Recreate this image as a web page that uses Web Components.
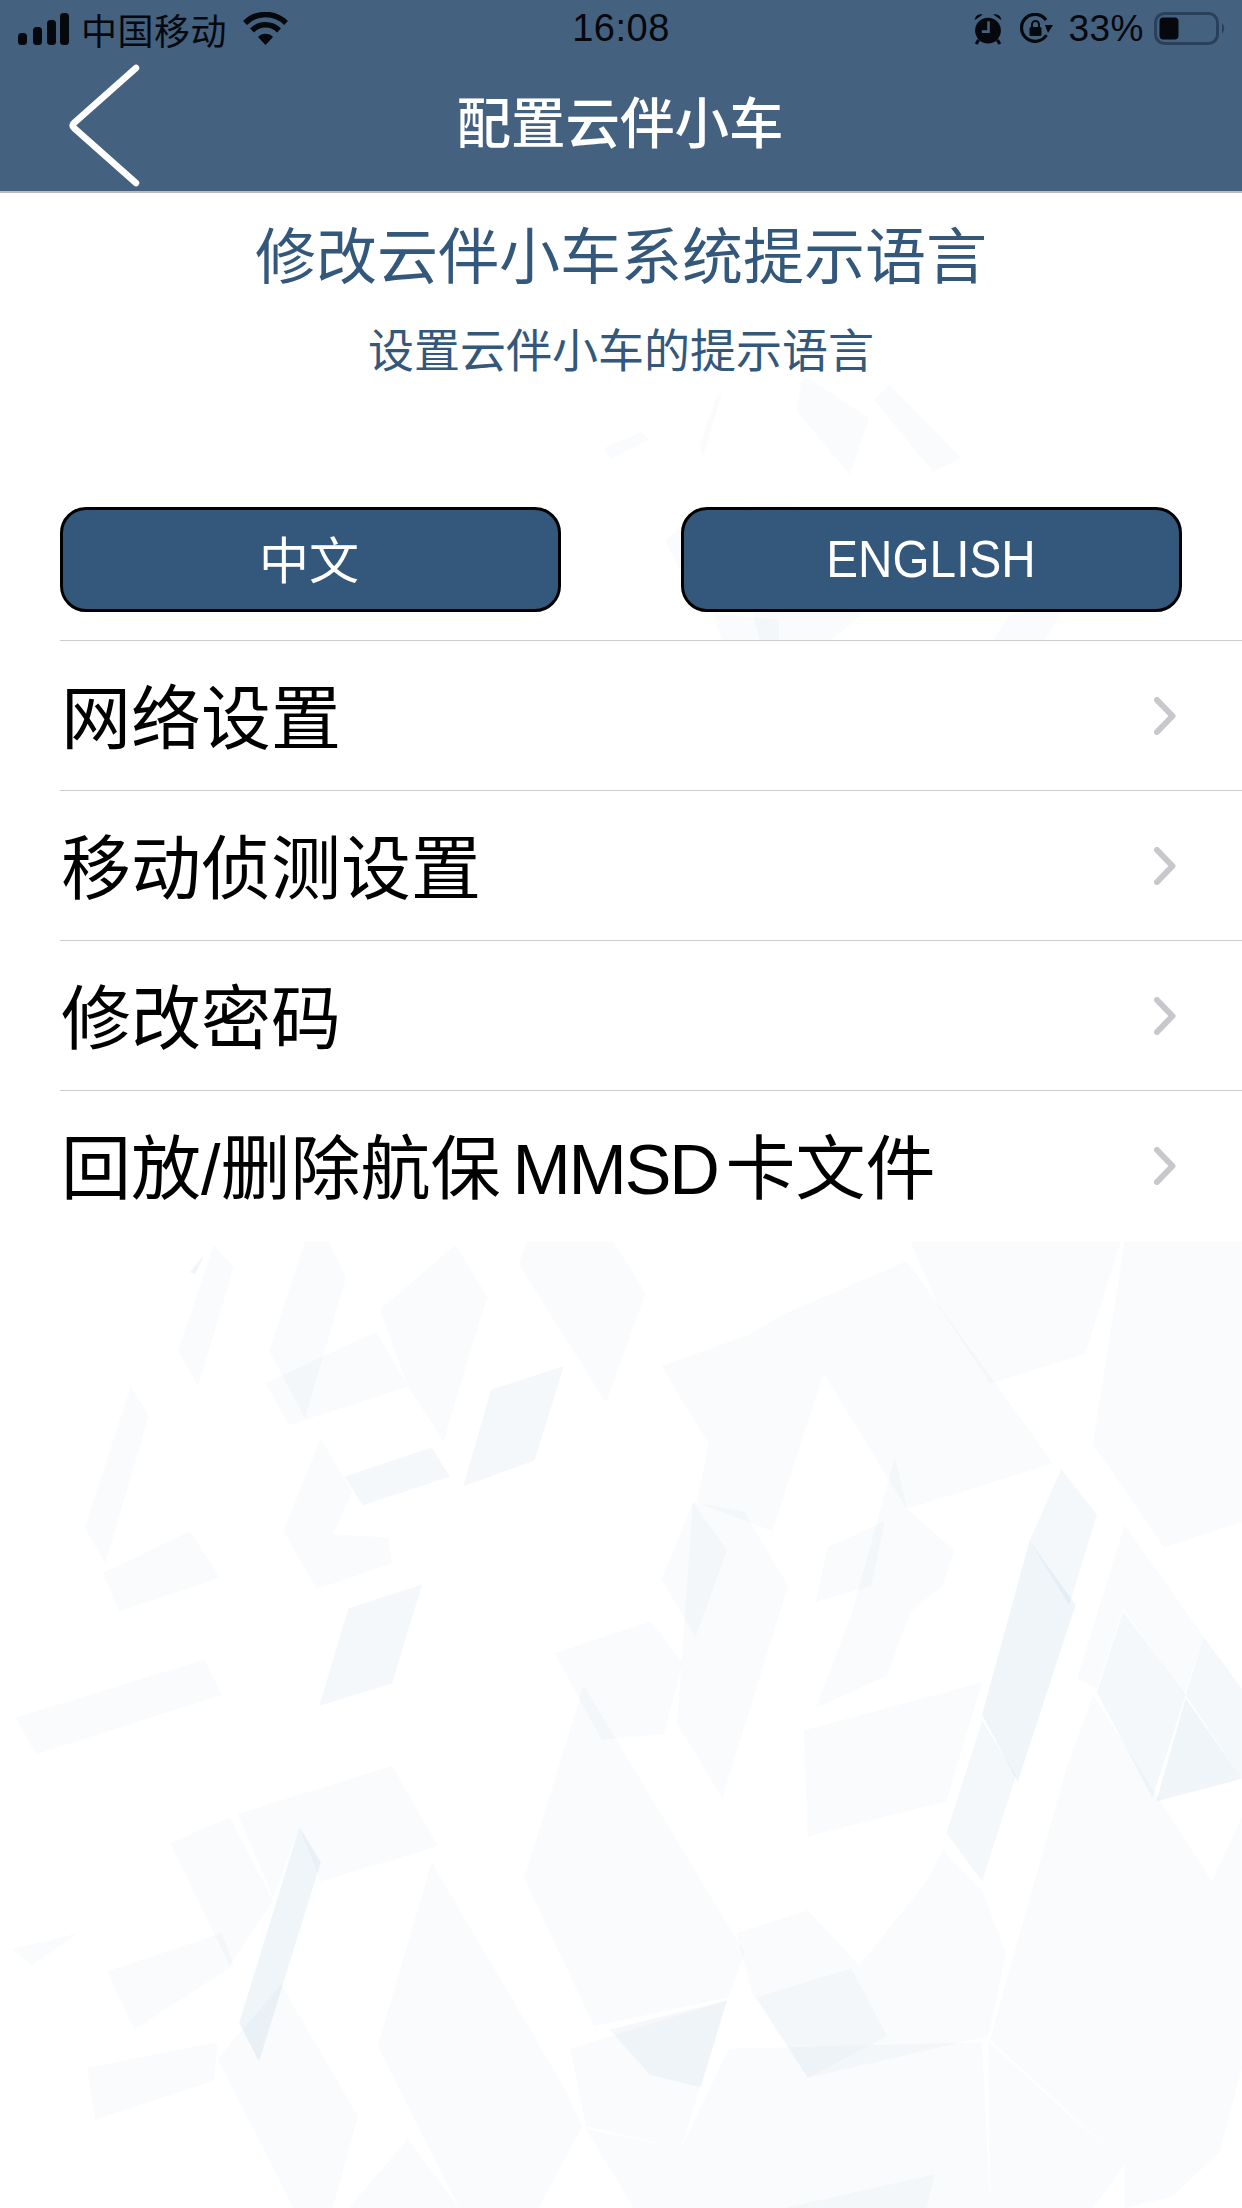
<!DOCTYPE html>
<html lang="zh">
<head>
<meta charset="utf-8">
<title>配置云伴小车</title>
<style>
    html, body { margin: 0; padding: 0; background: #fff; }
    body { font-family: "Liberation Sans", "Noto Sans CJK SC", sans-serif; }
</style>
</head>
<body>
<config-page>
    <lang-button slot="lang">中文</lang-button>
    <lang-button slot="lang" narrow>ENGLISH</lang-button>
    <menu-row>网络设置</menu-row>
    <menu-row>移动侦测设置</menu-row>
    <menu-row>修改密码</menu-row>
    <menu-row>回放/删除航保<span style="margin:0 8px 0 12px;letter-spacing:-2.2px">MMSD</span>卡文件</menu-row>
</config-page>

<script>
// faint background shapes, numbers measured off a 1568x1568 crop of the lower page
const LOWER_SHAPES = [
    [1, '270,70 295,105 250,290 225,235'],
    [1, '385,65 415,65 437,120 385,340 340,235'],
    [1, '475,205 515,290 365,350 335,285'],
    [1, '575,70 615,150 560,375 515,290 480,170'],
    [1, '655,100 665,65 775,65 815,145 765,315'],
    [2, '620,295 712,258 675,405 585,445'],
    [2, '435,430 545,385 568,430 458,475'],
    [1, '165,290 188,335 133,565 107,510'],
    [1, '130,580 240,515 278,588 150,640'],
    [1, '405,370 445,455 420,520 490,525 495,565 400,605 358,515'],
    [2, '440,635 533,598 495,752 403,787'],
    [1, '20,805 258,715 280,770 45,862'],
    [1, '835,258 945,210 985,180 1040,270 975,515 880,470 895,380'],
    [1, '985,180 1145,95 1330,410 1145,480 1040,270'],
    [1, '1150,65 1415,65 1370,240 1250,285 1185,165'],
    [1, '1420,65 1568,65 1568,310 1380,380'],
    [1, '1380,380 1568,310 1568,500 1470,540'],
    [1, '875,470 940,485 995,600 912,930 855,815'],
    [1, '835,590 875,470 918,545 878,680'],
    [1, '1045,540 1117,500 1100,600 1030,625'],
    [1, '1130,400 1145,480 1205,545 1190,600 1150,640 1120,740 1030,790 1075,645'],
    [1, '1015,825 1240,750 1195,935 1020,990'],
    [1, '700,705 822,655 862,720 838,830 760,840'],
    [1, '737,755 940,1170 920,1240 750,1285 662,1055'],
    [2, '1340,418 1385,490 1350,630 1300,530'],
    [3, '1300,530 1358,630 1285,905 1240,800'],
    [2, '1240,810 1283,895 1240,1060 1195,985'],
    [1, '1420,505 1520,680 1495,770 1418,635 1385,760 1360,745'],
    [2, '1418,640 1497,770 1455,930 1385,765'],
    [2, '1520,680 1568,760 1568,900 1497,770'],
    [3, '1497,775 1568,900 1460,935'],
    [1, '1380,770 1530,1060 1420,1500 1250,1305 1345,890'],
    [1, '1190,1010 1240,1075 1270,1170 1248,1300 1020,1365 950,1235 930,1140 1020,1105 1085,1190 1170,1060'],
    [1, '215,1000 290,960 345,1090 290,1190'],
    [1, '300,955 495,880 553,1005 405,1060 378,975 345,1085'],
    [3, '378,975 405,1030 327,1340 302,1280'],
    [1, '545,1030 710,1375 735,1440 680,1568 580,1568 477,1315'],
    [1, '720,1320 918,1245 860,1475 740,1440'],
    [2, '770,1290 918,1245 885,1380 820,1360'],
    [1, '275,1335 355,1220 452,1425 420,1568 370,1568'],
    [1, '1248,1310 1420,1500 1380,1568 1250,1568'],
    [1, '1530,1060 1568,960 1568,1350 1540,1480 1480,1550 1420,1568 1420,1500'],
    [1, '955,1240 1075,1195 1120,1300 1020,1365'],
    [1, '740,1445 860,1475 920,1320 1240,1310 1250,1568 800,1568'],
    [1, '135,1200 280,1140 295,1190 170,1290'],
    [1, '120,1430 270,1370 275,1310 110,1350'],
    [1, '440,1568 515,1460 580,1568'],
    [1, '1180,1515 1170,1568 990,1568'],
    [1, '15,1165 100,1140 40,1190'],
    [3, '240,112 258,85 246,116']
];
// same thing for the strip above the list, in page pixels
const UPPER_SHAPES = [
    [1, '803,375 869,418 850,475 796,410'],
    [1, '890,385 961,458 933,472 874,400'],
    [1, '604,448 642,432 649,440 611,459'],
    [1, '722,393 703,457 700,445 715,400'],
    [1, '713,613 779,620 779,641 722,641'],
    [1, '727,508 789,503 880,600 830,641 760,641'],
    [1, '665,540 690,520 690,590'],
    [1, '992,641 1010,615 1065,605 1045,641']
];
const OPACITY = { 1: 0.035, 2: 0.06, 3: 0.09 };

class BackdropArt extends HTMLElement {
    constructor() {
        super();
        const poly = ([level, points]) => `<polygon points="${points}" fill-opacity="${OPACITY[level]}"/>`;
        this.attachShadow({ mode: 'open' }).innerHTML = `
            <style>
                :host { position: absolute; inset: 0; display: block; }
                svg { display: block; width: 100%; height: 100%; }
            </style>
            <svg viewBox="0 0 1242 2208" fill="#4a90b8">
                ${UPPER_SHAPES.map(poly).join('')}
                <g transform="translate(0 1200) scale(.792 .643)">${LOWER_SHAPES.map(poly).join('')}</g>
            </svg>
        `;
    }
}

class StatusBar extends HTMLElement {
    constructor() {
        super();
        this.attachShadow({ mode: 'open' }).innerHTML = `
            <style>
                :host { display: grid; grid-template-columns: 1fr auto 1fr; align-items: center; height: 57px; padding: 0 15px 7px 18px; color: #05080d; font-size: 37px; }
                .left, .right { display: flex; align-items: center; }
                .right { justify-content: flex-end; }
                svg { display: block; flex: none; }
                .carrier { margin: 0 16px 0 11px; font-size: 36px; letter-spacing: .5px; }
                .time { font-size: 38px; letter-spacing: .5px; margin-right: 3px; }
                .pct { margin: 0 10px 0 15px; letter-spacing: .5px; }
            </style>
            <div class="left">
                <svg width="52" height="32" viewBox="0 0 52 32" fill="#05080d">
                    <rect x="0" y="20" width="9" height="12" rx="3.5"/>
                    <rect x="15" y="14" width="9" height="18" rx="3.5"/>
                    <rect x="29" y="7" width="9" height="25" rx="3.5"/>
                    <rect x="42" y="0" width="9" height="32" rx="3.5"/>
                </svg>
                <span class="carrier">中国移动</span>
                <svg width="45" height="33" viewBox="0 0 45 33" fill="none" stroke="#05080d" stroke-width="5.5">
                    <path d="M2 11 A29 29 0 0 1 43 11"/>
                    <path d="M9 18.5 A19 19 0 0 1 36 18.5"/>
                    <path d="M15 25 A10.5 10.5 0 0 1 30 25 L22.5 33 Z" fill="#05080d" stroke="none"/>
                </svg>
            </div>
            <div class="time">16:08</div>
            <div class="right">
                <svg width="30" height="33" viewBox="0 0 28 32" style="margin-right:17px">
                    <circle cx="14" cy="18" r="12.5" fill="#05080d"/>
                    <path d="M1 8 A6 6 0 0 1 9 2.5 Z M27 8 A6 6 0 0 0 19 2.5 Z" fill="#05080d"/>
                    <path d="M5 27 L2.5 31 M23 27 L25.5 31" stroke="#05080d" stroke-width="3"/>
                    <path d="M14.5 9 V19 H8" fill="none" stroke="#44617f" stroke-width="2.5"/>
                </svg>
                <svg width="33" height="32" viewBox="0 0 33 32">
                    <path d="M26.5 22 A13.5 13.5 0 1 1 26 7" fill="none" stroke="#05080d" stroke-width="3.2"/>
                    <path d="M25 12 L33 12 L28 20 Z" fill="#05080d"/>
                    <rect x="9.5" y="14" width="12" height="9" rx="1.5" fill="#05080d"/>
                    <path d="M12 14 V11.5 A3.5 3.5 0 0 1 19 11.5 V14" fill="none" stroke="#05080d" stroke-width="2"/>
                </svg>
                <span class="pct">33%</span>
                <svg width="73" height="33" viewBox="0 0 73 33">
                    <rect x="1.5" y="1.5" width="62" height="30" rx="9" fill="none" stroke="#29405a" stroke-width="3"/>
                    <rect x="5.5" y="5.5" width="19" height="22" rx="4" fill="#05080d"/>
                    <path d="M68 11 A8 8 0 0 1 68 22 Z" fill="#29405a"/>
                </svg>
            </div>
        `;
    }
}

class NavBar extends HTMLElement {
    constructor() {
        super();
        this.attachShadow({ mode: 'open' }).innerHTML = `
            <style>
                :host { display: flex; position: relative; align-items: center; justify-content: center; height: 127px; padding: 0 2px 5px 0; box-sizing: border-box; }
                .back { position: absolute; left: 68px; top: 0; display: block; }
                h1 { margin: 0; font-size: 54.5px; font-weight: 500; line-height: 64px; color: #fff; }
            </style>
            <svg class="back" width="74" height="124" viewBox="0 0 74 124" fill="none">
                <path d="M68 4 L6 59 Q3 61 6 64 L68 119" stroke="#fff" stroke-width="6.5" stroke-linecap="round" stroke-linejoin="round"/>
            </svg>
            <h1><slot></slot></h1>
        `;
    }
}

class LangButton extends HTMLElement {
    constructor() {
        super();
        this.attachShadow({ mode: 'open' }).innerHTML = `
            <style>
                :host { display: flex; align-items: center; justify-content: center; box-sizing: border-box; width: 501px; height: 105px; padding: 0 3px 5px 0; background: #34587b; border: 3px solid #000; border-radius: 26px; color: #fff; font-size: 50px; }
                :host([narrow]) { font-size: 51px; padding: 0 2px 0 0; }
                :host([narrow]) span { display: inline-block; transform: scaleX(.935); }
            </style>
            <span><slot></slot></span>
        `;
    }
}

class MenuRow extends HTMLElement {
    constructor() {
        super();
        this.attachShadow({ mode: 'open' }).innerHTML = `
            <style>
                :host { display: block; background: #fff; padding-left: 60px; color: #000; font-size: 70px; }
                .row { display: flex; align-items: center; justify-content: space-between; height: 150px; box-sizing: border-box; border-top: 1px solid #cbcbcb; padding: 0 66px 5px 1px; }
                svg { display: block; flex: none; margin-top: 5px; }
            </style>
            <div class="row">
                <span><slot></slot></span>
                <svg width="22" height="38" viewBox="0 0 22 38" fill="none">
                    <path d="M3 3 L18.5 19 L3 35" stroke="#c7c7cc" stroke-width="6" stroke-linecap="round" stroke-linejoin="round"/>
                </svg>
            </div>
        `;
    }
}

class ConfigPage extends HTMLElement {
    constructor() {
        super();
        this.attachShadow({ mode: 'open' }).innerHTML = `
            <style>
                :host { display: block; position: relative; width: 1242px; height: 2208px; overflow: hidden; background: #fff; font-family: "Liberation Sans", "Noto Sans CJK SC", sans-serif; }
                .content { position: relative; }
                .top { background: #44617f; border-bottom: 2px solid #b9bdc2; }
                .intro { padding-top: 30px; text-align: center; color: #34587b; }
                h2 { margin: 0; font-size: 61px; font-weight: 400; line-height: 70px; }
                p { margin: 33px 0 0; font-size: 46px; line-height: 50px; }
                .langs { display: flex; justify-content: space-between; margin-top: 131px; padding: 0 60px 28px 60px; }
            </style>
            <backdrop-art></backdrop-art>
            <div class="content">
                <div class="top">
                    <status-bar></status-bar>
                    <nav-bar>配置云伴小车</nav-bar>
                </div>
                <div class="intro">
                    <h2>修改云伴小车系统提示语言</h2>
                    <p>设置云伴小车的提示语言</p>
                </div>
                <div class="langs"><slot name="lang"></slot></div>
                <slot></slot>
            </div>
        `;
    }
}

customElements.define('backdrop-art', BackdropArt);
customElements.define('status-bar', StatusBar);
customElements.define('nav-bar', NavBar);
customElements.define('lang-button', LangButton);
customElements.define('menu-row', MenuRow);
customElements.define('config-page', ConfigPage);
</script>
</body>
</html>
